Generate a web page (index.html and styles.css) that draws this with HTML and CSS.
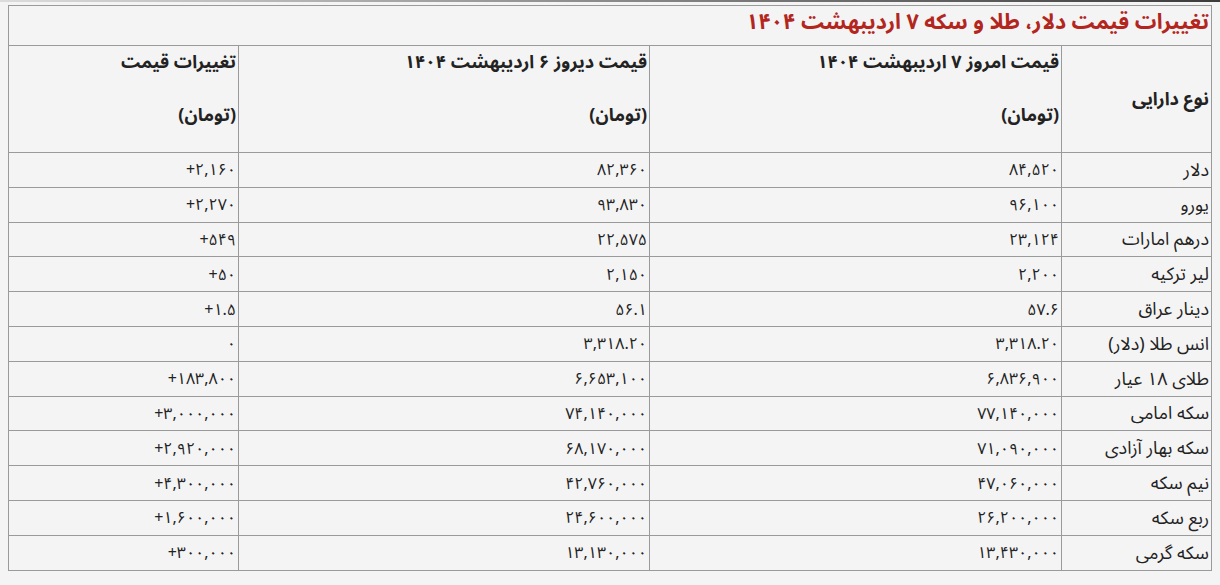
FILE: index.html
```html
<!DOCTYPE html>
<html lang="fa" dir="rtl">
<head>
<meta charset="utf-8">
<title>تغییرات قیمت دلار، طلا و سکه</title>
<link rel="stylesheet" href="styles.css">
</head>
<body>
<div class="topbar"></div>
<div class="page">
<table class="prices">
  <colgroup>
    <col class="c-name">
    <col class="c-today">
    <col class="c-yest">
    <col class="c-diff">
  </colgroup>
  <tr class="title-row">
    <td colspan="4" class="title">تغییرات قیمت دلار، طلا و سکه ۷ اردیبهشت ۱۴۰۴</td>
  </tr>
  <tr class="head-row">
    <th class="mid">نوع دارایی</th>
    <th><p>قیمت امروز ۷ اردیبهشت ۱۴۰۴</p><p>(تومان)</p></th>
    <th><p>قیمت دیروز ۶ اردیبهشت ۱۴۰۴</p><p>(تومان)</p></th>
    <th><p>تغییرات قیمت</p><p>(تومان)</p></th>
  </tr>
  <tr><td>دلار</td><td><span class="num">۸۴,۵۲۰</span></td><td><span class="num">۸۲,۳۶۰</span></td><td><span class="num">+۲,۱۶۰</span></td></tr>
  <tr><td>یورو</td><td><span class="num">۹۶,۱۰۰</span></td><td><span class="num">۹۳,۸۳۰</span></td><td><span class="num">+۲,۲۷۰</span></td></tr>
  <tr><td>درهم امارات</td><td><span class="num">۲۳,۱۲۴</span></td><td><span class="num">۲۲,۵۷۵</span></td><td><span class="num">+۵۴۹</span></td></tr>
  <tr><td>لیر ترکیه</td><td><span class="num">۲,۲۰۰</span></td><td><span class="num">۲,۱۵۰</span></td><td><span class="num">+۵۰</span></td></tr>
  <tr><td>دینار عراق</td><td><span class="num">۵۷.۶</span></td><td><span class="num">۵۶.۱</span></td><td><span class="num">+۱.۵</span></td></tr>
  <tr><td>انس طلا (دلار)</td><td><span class="num">۳,۳۱۸.۲۰</span></td><td><span class="num">۳,۳۱۸.۲۰</span></td><td><span class="num">۰</span></td></tr>
  <tr><td>طلای ۱۸ عیار</td><td><span class="num">۶,۸۳۶,۹۰۰</span></td><td><span class="num">۶,۶۵۳,۱۰۰</span></td><td><span class="num">+۱۸۳,۸۰۰</span></td></tr>
  <tr><td>سکه امامی</td><td><span class="num">۷۷,۱۴۰,۰۰۰</span></td><td><span class="num">۷۴,۱۴۰,۰۰۰</span></td><td><span class="num">+۳,۰۰۰,۰۰۰</span></td></tr>
  <tr><td>سکه بهار آزادی</td><td><span class="num">۷۱,۰۹۰,۰۰۰</span></td><td><span class="num">۶۸,۱۷۰,۰۰۰</span></td><td><span class="num">+۲,۹۲۰,۰۰۰</span></td></tr>
  <tr><td>نیم سکه</td><td><span class="num">۴۷,۰۶۰,۰۰۰</span></td><td><span class="num">۴۲,۷۶۰,۰۰۰</span></td><td><span class="num">+۴,۳۰۰,۰۰۰</span></td></tr>
  <tr><td>ربع سکه</td><td><span class="num">۲۶,۲۰۰,۰۰۰</span></td><td><span class="num">۲۴,۶۰۰,۰۰۰</span></td><td><span class="num">+۱,۶۰۰,۰۰۰</span></td></tr>
  <tr><td>سکه گرمی</td><td><span class="num">۱۳,۴۳۰,۰۰۰</span></td><td><span class="num">۱۳,۱۳۰,۰۰۰</span></td><td><span class="num">+۳۰۰,۰۰۰</span></td></tr>
</table>
</div>
</body>
</html>
```
FILE: styles.css
```css
html, body {
  margin: 0;
  padding: 0;
  background: #f4f4f4;
}
body {
  font-family: "Noto Sans Arabic", "DejaVu Sans", sans-serif;
  color: #222;
}
.topbar {
  height: 2px;
  background: linear-gradient(to right, #dcdcdc, #9a9a9a 40%, #3c3c3c);
}
.page {
  padding: 3px 8px 0 9px;
}
.prices {
  width: 1203px;
  border-collapse: collapse;
  border: 1px solid #8c8c8c;
  table-layout: fixed;
}
.c-name { width: 150px; }
.c-today { width: 412px; }
.c-yest { width: 411px; }
.c-diff { width: 230px; }
.prices td, .prices th {
  border: 1px solid #9a9a9a;
  text-align: right;
  padding: 0 2px;
  font-size: 18px;
  line-height: 24px;
  height: 33.8px;
  vertical-align: middle;
  font-weight: normal;
  white-space: nowrap;
}
.prices td.title {
  height: 37px;
  color: #b3261e;
  font-weight: bold;
  font-size: 21.5px;
  line-height: 28px;
  vertical-align: top;
  padding-top: 2px;
}
.head-row th {
  height: 102px;
  font-weight: bold;
  font-size: 18px;
  vertical-align: top;
  padding-top: 4px;
}
.head-row th.mid {
  vertical-align: middle;
  padding-top: 0;
}
.head-row p {
  margin: 0 0 29px 0;
  line-height: 24px;
}
.head-row p + p {
  margin-bottom: 0;
}
.num {
  direction: ltr;
  unicode-bidi: isolate;
  font-size: 16px;
}
```
